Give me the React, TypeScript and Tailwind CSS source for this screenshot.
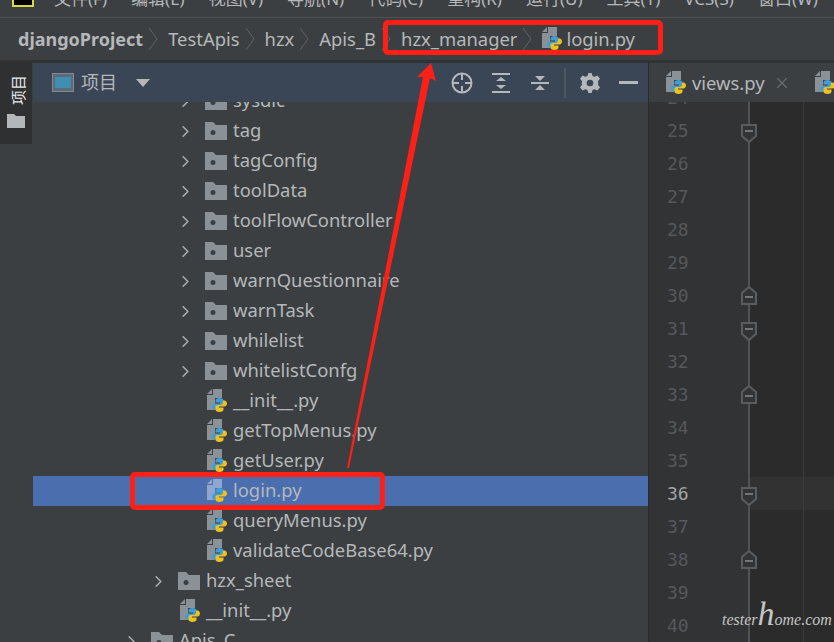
import { ChevronRight, X } from "lucide-react";

const uiFont = { fontFamily: '"Noto Sans", "Noto Sans CJK SC", sans-serif' };

const menus = ["文件(F)", "编辑(E)", "视图(V)", "导航(N)", "代码(C)", "重构(R)", "运行(U)", "工具(T)", "VCS(S)", "窗口(W)"];
const crumbs = ["TestApis", "hzx", "Apis_B"];

const tree = [
  { name: "sysdic", kind: "folder", level: 2 },
  { name: "tag", kind: "folder", level: 2 },
  { name: "tagConfig", kind: "folder", level: 2 },
  { name: "toolData", kind: "folder", level: 2 },
  { name: "toolFlowController", kind: "folder", level: 2 },
  { name: "user", kind: "folder", level: 2 },
  { name: "warnQuestionnaire", kind: "folder", level: 2 },
  { name: "warnTask", kind: "folder", level: 2 },
  { name: "whilelist", kind: "folder", level: 2 },
  { name: "whitelistConfg", kind: "folder", level: 2 },
  { name: "__init__.py", kind: "file", level: 2 },
  { name: "getTopMenus.py", kind: "file", level: 2 },
  { name: "getUser.py", kind: "file", level: 2 },
  { name: "login.py", kind: "file", level: 2, selected: true },
  { name: "queryMenus.py", kind: "file", level: 2 },
  { name: "validateCodeBase64.py", kind: "file", level: 2 },
  { name: "hzx_sheet", kind: "folder", level: 1 },
  { name: "__init__.py", kind: "file", level: 1 },
  { name: "Apis_C", kind: "folder", level: 0 },
];

const lines = [
  { n: 24 }, { n: 25, fold: "down" }, { n: 26 }, { n: 27 }, { n: 28 }, { n: 29 },
  { n: 30, fold: "up" }, { n: 31, fold: "down" }, { n: 32 }, { n: 33, fold: "up" },
  { n: 34 }, { n: 35 }, { n: 36, fold: "down", current: true }, { n: 37 },
  { n: 38, fold: "up" }, { n: 39 }, { n: 40 },
];

function PyIcon({ dim = false }: { dim?: boolean }) {
  const doc = dim ? "#90a6cf" : "#8a9297";
  return (
    <svg width="21" height="24" viewBox="0 0 21 24" className="shrink-0">
      <path d="M6 0h9v9H8v12H0V6h6z" fill={doc} />
      <path d="M0 5h5V0z" fill={doc} />
      <path d="M12.500 9c-2.500 0-4 1-4 2.500v2h4.500v1H7.500C6 14.500 5 16 5 17.500s1 3 2.500 3H9v-2c0-1.500 1-2.500 2.500-2.500h3c1.200 0 2-1 2-2v-2.500c0-1.500-1.500-2.500-4-2.500z" fill="#3f9ed6" />
      <path d="M12.500 23c2.500 0 4-1 4-2.500v-2H12v-1h5.500c1.500 0 2.500-1.500 2.500-3s-1-3-2.500-3H16v2c0 1.500-1 2.500-2.500 2.500h-3c-1.200 0-2 1-2 2v2.500c0 1.500 1.500 2.500 4 2.500z" fill="#f0c020" />
    </svg>
  );
}

function FolderIcon() {
  return (
    <svg width="22" height="18" viewBox="0 0 22 18" className="shrink-0">
      <path d="M0 0h8l3 3h11v15H0z" fill="#8a9297" />
      <circle cx="8" cy="10.500" r="2.500" fill="#3c3f41" />
    </svg>
  );
}

function Sep() {
  return (
    <svg width="25" height="26" viewBox="0 0 25 26" className="shrink-0">
      <path d="M6 2l8 11-8 11" fill="none" stroke="#606365" strokeWidth="1" />
    </svg>
  );
}

function FoldMark({ dir }: { dir: string }) {
  const d = dir === "down" ? "M1 1h14v11l-7 6-7-6z" : "M1 18h14V7L8 1 1 7z";
  return (
    <svg width="16" height="19" viewBox="0 0 16 19">
      <path d={d} fill="#313335" stroke="#5a5d5f" strokeWidth="2" />
      <path d={dir === "down" ? "M4 7h8" : "M4 11h8"} stroke="#8a8d8f" strokeWidth="1.500" />
    </svg>
  );
}

function TreeRow({ item }: { item: (typeof tree)[number] }) {
  const pad = item.kind === "folder"
    ? ["pl-[89px]", "pl-[116px]", "pl-[143px]"][item.level]
    : ["pl-[120px]", "pl-[147px]", "pl-[174px]"][item.level];
  return (
    <div className={`flex h-[30px] shrink-0 items-center ${pad} ${item.selected ? "bg-[#4b6eaf]" : ""}`}>
      {item.kind === "folder" ? (
        <>
          <ChevronRight size={19} strokeWidth={2} className="mr-[10px] text-[#a9acae]" />
          <FolderIcon />
        </>
      ) : (
        <PyIcon dim={item.selected} />
      )}
      <span className={`pb-[2px] text-[18.4px] leading-none text-[#b4b8ba] ${item.kind === "folder" ? "ml-[6px]" : "ml-[5px]"}`}>{item.name}</span>
    </div>
  );
}

export default function App() {
  return (
    <div style={uiFont} className="relative flex h-[642px] w-[834px] flex-col overflow-hidden bg-[#3c3f41]">
      {/* menu bar, cut off at the top of the picture */}
      <div className="flex h-[18px] shrink-0 items-start overflow-hidden border-b border-[#515151] bg-[#3c3f41] pl-[12px]">
        <div className="mr-[20px] h-[7px] w-[22px] border-2 border-t-0 border-[#d8d845] bg-black" />
        <div className="mt-[-13px] flex items-start gap-[24px] text-[17px] leading-[24px] text-[#b4b8ba]">
          {menus.map((m) => (
            <span key={m} className="whitespace-nowrap">{m}</span>
          ))}
        </div>
      </div>

      {/* breadcrumb */}
      <div className="flex h-[45px] shrink-0 items-center border-b-[3px] border-[#313233] pl-[18px] text-[18.4px] text-[#b4b8ba]">
        <span className="text-[18px] font-bold">djangoProject</span>
        {crumbs.map((c) => (
          <div key={c} className="flex items-center">
            <Sep />
            <span>{c}</span>
          </div>
        ))}
        <Sep />
        <span>hzx_manager</span>
        <Sep />
        <PyIcon />
        <span className="ml-[3px]">login.py</span>
      </div>

      <div className="flex min-h-0 flex-1">
        {/* tool window strip */}
        <div className="flex w-[33px] shrink-0 flex-col">
          <div className="flex h-[81px] w-[32px] flex-col items-center bg-[#2f3032] pt-[12px] pl-[4px] text-[#e6e6e6]">
            <span className="rotate-180 text-[15px] leading-[16px] [text-orientation:sideways] [writing-mode:vertical-rl]">项目</span>
            <svg width="18" height="14" viewBox="0 0 18 14" className="mr-[4px] mt-[9px]"><path d="M0 0h7l2 2h9v12H0z" fill="#b4b7b9" /></svg>
          </div>
        </div>

        {/* project panel */}
        <div className="flex w-[616px] shrink-0 flex-col border-r border-[#2b2b2b]">
          <div className="z-10 flex h-[39px] shrink-0 items-center bg-[#3a4656] pl-[19px] pr-[10px] text-[#b4b8ba]">
            <svg width="22" height="19" viewBox="0 0 22 19"><rect x="0.500" y="0.500" width="21" height="18" fill="#5e6a75" stroke="#7f8b94" /><rect x="3" y="4" width="16" height="11" fill="#3f8fb5" /></svg>
            <span className="ml-[7px] text-[18px]">项目</span>
            <svg width="14" height="8" viewBox="0 0 14 8" className="ml-[19px]"><path d="M0 0h14l-7 8z" fill="#b4b8ba" /></svg>
            <div className="ml-auto flex items-center">
              <svg width="22" height="22" viewBox="0 0 22 22" fill="none" stroke="#b4b8ba" strokeWidth="2"><circle cx="11" cy="11" r="9.500" /><path d="M11 1v7M11 14v7M1 11h7M14 11h7" /></svg>
              <svg width="20" height="20" viewBox="0 0 20 20" className="ml-[18px]" fill="#b4b8ba"><path d="M1 0h18v2H1zM1 18h18v2H1zM10 4l5 4H5zM10 16l-5-4h10z" /></svg>
              <svg width="20" height="20" viewBox="0 0 20 20" className="ml-[19px]" fill="#b4b8ba"><path d="M1 9h18v2H1zM10 8L5 3h10zM10 12l5 5H5z" /></svg>
              <div className="ml-[14px] h-[30px] w-[2px] bg-[#4e5660]" />
              <svg width="20" height="20" viewBox="0 0 24 24" className="ml-[14px]" fill="#b4b8ba"><path fillRule="evenodd" d="M10 0h4l1 3.500 2.500 1L21 3l3 4-2.500 3 .5 2-.5 2 2.500 3-3 4-3.500-1.500-2.500 1L14 24h-4l-1-3.500-2.500-1L3 21l-3-4 2.500-3L2 12l.500-2L0 7l3-4 3.500 1.500 2.500-1zM12 8a4 4 0 100 8 4 4 0 000-8z" /></svg>
              <div className="ml-[19px] h-[3px] w-[19px] bg-[#b4b8ba]" />
            </div>
          </div>
          <div className="flex min-h-0 flex-1 flex-col overflow-hidden">
            <div className="mt-[-16px] flex flex-col">
              {tree.map((item, i) => (
                <TreeRow key={i} item={item} />
              ))}
            </div>
          </div>
        </div>

        {/* editor */}
        <div className="flex min-w-0 flex-1 flex-col">
          <div className="z-10 flex h-[39px] shrink-0 items-center overflow-hidden bg-[#3c3f41] pl-[17px] text-[18.4px] text-[#b4b8ba]">
            <PyIcon />
            <span className="ml-[5px]">views.py</span>
            <X size={18} strokeWidth={1.500} className="ml-[8px] shrink-0 text-[#6b6e70]" />
            <div className="ml-[24px] shrink-0"><PyIcon /></div>
          </div>
          <div className="min-h-0 flex-1 overflow-hidden bg-[#2b2b2b]">
            <div className="mt-[-21px] flex flex-col">
              {lines.map((l) => (
                <div key={l.n} className="flex h-[33px] shrink-0">
                  <div className="flex w-[100px] shrink-0 items-center bg-[#313335]">
                    <span className={`ml-[18px] font-['DejaVu_Sans_Mono',monospace] text-[18px] ${l.current ? "text-[#a4a3a3]" : "text-[#56595c]"}`}>{l.n}</span>
                  </div>
                  <div className="relative flex flex-1">
                    {l.fold && (
                      <div className={`absolute left-[-8px] z-10 ${l.fold === "down" ? "top-[10px]" : "top-[7px]"}`}><FoldMark dir={l.fold} /></div>
                    )}
                    <div className="absolute left-[-1px] top-0 h-full w-[2px] bg-[#505254]" />
                    <div className={`flex-1 ${l.current ? "bg-[#323232]" : ""}`}>
                      <div className="ml-[54px] h-full w-px bg-[#3b3b3b]" />
                    </div>
                  </div>
                </div>
              ))}
            </div>
          </div>
        </div>
      </div>

      {/* red annotations drawn on top of the screenshot */}
      <div className="absolute left-[383px] top-[20px] z-20 h-[35px] w-[280px] rounded-[5px] border-[5px] border-[#fe1f16]" />
      <div className="absolute left-[130px] top-[472px] z-20 h-[38px] w-[255px] rounded-[5px] border-[5px] border-[#fe1f16]" />
      <svg width="834" height="642" viewBox="0 0 834 642" className="pointer-events-none absolute left-0 top-0 z-20">
        <path d="M431 63l5 18-6-3-81 390h-2l76-391h-6z" fill="#fe1f16" />
      </svg>
      <div className="absolute left-[722px] top-[596px] z-20 whitespace-nowrap font-['Liberation_Serif',serif] italic leading-[36px] text-[#c4c4c4]">
        <span className="text-[16px]">tester</span>
        <span className="text-[34px] font-light">h</span>
        <span className="text-[16px]">ome.com</span>
      </div>
    </div>
  );
}
